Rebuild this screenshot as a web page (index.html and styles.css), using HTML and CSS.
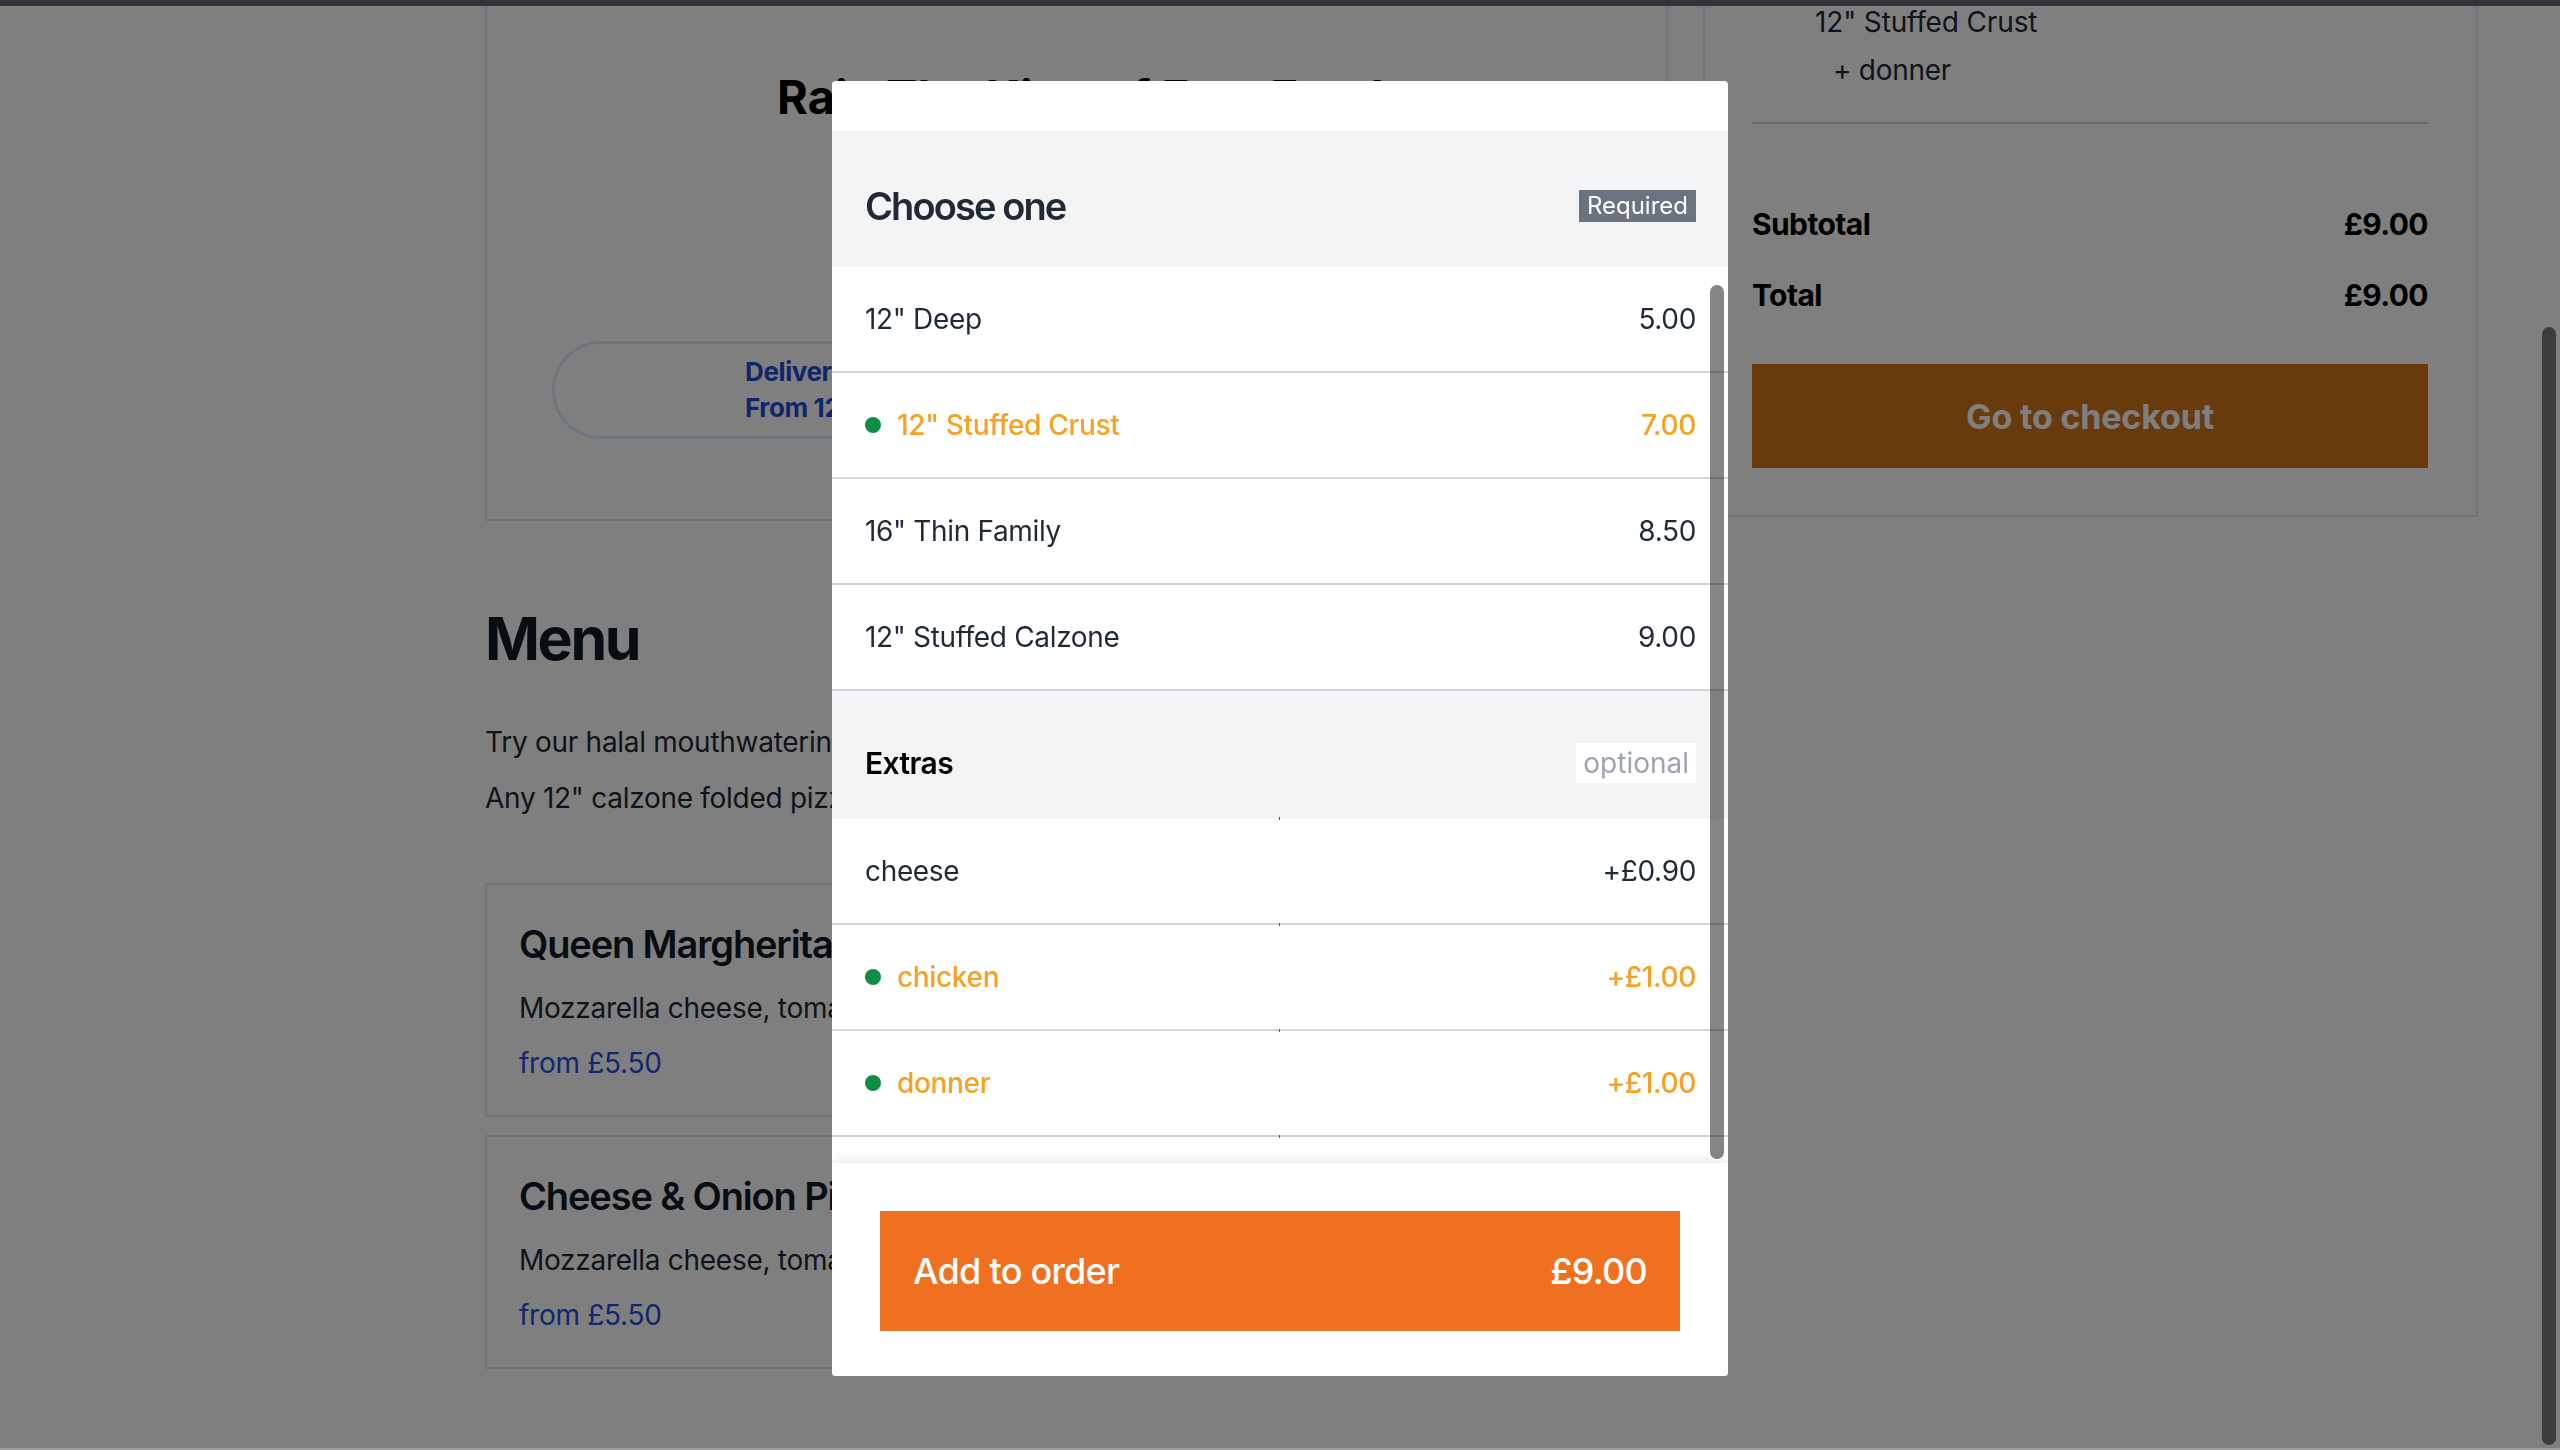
FILE: index.html
```html
<!DOCTYPE html>
<html lang="en">
<head>
<meta charset="utf-8">
<title>Raja - Menu</title>
<link rel="stylesheet" href="styles.css">
</head>
<body>
<div class="page">
  <div class="main-col">
    <section class="info-card">
      <h1 class="shop-title">Raja The King of Fast Food</h1>
      <div class="pill">
        <div class="pill-text">
          <span>Delivery</span>
          <span>From 12:00</span>
        </div>
      </div>
    </section>

    <section class="menu">
      <h2 class="menu-title">Menu</h2>
      <p class="menu-desc">Try our halal mouthwatering pizzas, made fresh to order.</p>
      <p class="menu-desc">Any 12" calzone folded pizza can be stuffed with your favourite toppings.</p>

      <div class="dish">
        <h3 class="dish-name">Queen Margherita</h3>
        <p class="dish-desc">Mozzarella cheese, tomato sauce and oregano</p>
        <p class="dish-price">from £5.50</p>
      </div>
      <div class="dish">
        <h3 class="dish-name">Cheese &amp; Onion Pizza</h3>
        <p class="dish-desc">Mozzarella cheese, tomato sauce and onion</p>
        <p class="dish-price">from £5.50</p>
      </div>
    </section>
  </div>

  <aside class="cart">
    <div class="cart-item">12" Stuffed Crust</div>
    <div class="cart-extra">+ donner</div>
    <hr class="cart-rule">
    <div class="cart-line"><span>Subtotal</span><span>£9.00</span></div>
    <div class="cart-line total"><span>Total</span><span>£9.00</span></div>
    <button class="checkout">Go to checkout</button>
  </aside>
</div>

<div class="overlay"></div>

<div class="modal">
  <div class="modal-top"></div>
  <div class="modal-scroll">
    <div class="group-head">
      <span class="group-title">Choose one</span>
      <span class="badge-required">Required</span>
    </div>
    <div class="opt"><span class="opt-name">12" Deep</span><span class="opt-price">5.00</span></div>
    <div class="opt selected"><span class="opt-name"><i class="dot"></i>12" Stuffed Crust</span><span class="opt-price">7.00</span></div>
    <div class="opt"><span class="opt-name">16" Thin Family</span><span class="opt-price">8.50</span></div>
    <div class="opt"><span class="opt-name">12" Stuffed Calzone</span><span class="opt-price">9.00</span></div>

    <div class="group-head extras-head">
      <span class="group-title small">Extras</span>
      <span class="badge-optional">optional</span>
    </div>
    <div class="opt extra"><span class="opt-name">cheese</span><span class="opt-price">+£0.90</span></div>
    <div class="opt extra selected"><span class="opt-name"><i class="dot"></i>chicken</span><span class="opt-price">+£1.00</span></div>
    <div class="opt extra selected"><span class="opt-name"><i class="dot"></i>donner</span><span class="opt-price">+£1.00</span></div>
    <div class="opt extra"></div>
  </div>
  <div class="thumb"></div>
  <div class="modal-foot">
    <button class="add-btn"><span>Add to order</span><span>£9.00</span></button>
  </div>
</div>

<div class="topbar"></div>
<div class="page-scroll"></div>
<div class="bottom-edge"></div>
</body>
</html>
```

FILE: styles.css
```css
* { box-sizing: border-box; }
html, body { margin: 0; padding: 0; height: 100%; overflow: hidden; }
body {
  background: #ffffff;
  font-family: "Inter", "Liberation Sans", sans-serif;
  color: #1f2937;
}

.page {
  display: flex;
  align-items: flex-start;
  gap: 35px;
  padding-left: 485px;
  margin-top: -120px;
}
.main-col { width: 1183px; }

.info-card {
  border: 2px solid #e5e7eb;
  padding: 186px 0 80px 0;
}
.shop-title {
  margin: 0 0 216px 290px;
  font-size: 47px;
  line-height: 57px;
  font-weight: 700;
  color: #000;
  white-space: nowrap;
  letter-spacing: 0;
}
.pill {
  margin-left: 65px;
  width: 560px;
  height: 98px;
  border: 3px solid #dbeafe;
  border-radius: 49px;
  background: #ffffff;
  display: flex;
  align-items: center;
  padding-left: 190px;
}
.pill-text {
  display: flex;
  flex-direction: column;
  font-size: 26px;
  line-height: 36px;
  font-weight: 700;
  color: #1e4fd0;
  letter-spacing: -0.015em;
}

.menu { padding-top: 82px; }
.menu-title {
  margin: 0 0 40px 0;
  font-size: 59px;
  line-height: 71px;
  font-weight: 700;
  color: #111827;
  letter-spacing: -0.04em;
}
.menu-desc {
  margin: 0;
  font-size: 28px;
  line-height: 56px;
  color: #1f2937;
  white-space: nowrap;
  letter-spacing: -0.01em;
}
.menu-desc + .dish { margin-top: 57px; }
.dish {
  border: 2px solid #e5e7eb;
  padding: 36px 32px 32px 32px;
  margin-bottom: 18px;
}
.dish-name {
  margin: 0 0 21px 0;
  font-size: 38px;
  line-height: 46px;
  font-weight: 600;
  color: #111827;
  letter-spacing: -0.03em;
  white-space: nowrap;
}
.dish-desc {
  margin: 0 0 15px 0;
  font-size: 28px;
  line-height: 40px;
  color: #1f2937;
  letter-spacing: -0.01em;
  white-space: nowrap;
}
.dish-price {
  margin: 0;
  font-size: 28px;
  line-height: 40px;
  color: #2250e0;
  letter-spacing: -0.01em;
}

.cart {
  width: 775px;
  border: 2px solid #e5e7eb;
  padding: 116px 48px 47px 47px;
}
.cart-item {
  font-size: 28px;
  line-height: 48px;
  padding-left: 63px;
  color: #1f2937;
  letter-spacing: -0.005em;
}
.cart-extra {
  font-size: 28px;
  line-height: 48px;
  padding-left: 81px;
  color: #1f2937;
  letter-spacing: -0.01em;
}
.cart-rule {
  margin: 28px 0 0 0;
  border: 0;
  height: 2px;
  background: #d1d5db;
}
.cart-line {
  display: flex;
  justify-content: space-between;
  font-size: 30px;
  line-height: 44px;
  font-weight: 700;
  color: #000;
  margin-top: 78px;
  letter-spacing: -0.02em;
}
.cart-line.total { margin-top: 27px; }
.checkout {
  display: block;
  width: 100%;
  height: 104px;
  margin-top: 47px;
  border: 0;
  background: #d27418;
  color: #ffffff;
  font-family: inherit;
  font-size: 34px;
  font-weight: 700;
  letter-spacing: -0.005em;
}

.overlay {
  position: fixed;
  inset: 0;
  background: rgba(0, 0, 0, 0.5);
}

.modal {
  position: fixed;
  left: 832px;
  top: 81px;
  width: 896px;
  height: 1295px;
  background: #ffffff;
  border-radius: 4px;
  overflow: hidden;
  display: flex;
  flex-direction: column;
}
.modal-top { height: 50px; flex: none; }
.modal-scroll {
  height: 1032px;
  flex: none;
  overflow: hidden;
}
.group-head {
  height: 136px;
  background: #f3f4f6;
  display: flex;
  align-items: center;
  justify-content: space-between;
  padding: 14px 32px 0 33px;
}
.extras-head { height: 128px; padding-top: 16px; }
.group-title {
  font-size: 38px;
  line-height: 46px;
  font-weight: 600;
  color: #1f2937;
  letter-spacing: -0.05em;
}
.group-title.small {
  font-size: 30px;
  font-weight: 600;
  color: #000;
  letter-spacing: -0.02em;
}
.badge-required {
  height: 32px;
  padding: 0 8px;
  background: #6b7280;
  color: #ffffff;
  font-size: 24px;
  line-height: 32px;
}
.badge-optional {
  height: 40px;
  padding: 0 7px;
  background: #ffffff;
  color: #9ca3af;
  font-size: 28px;
  line-height: 40px;
}
.opt {
  position: relative;
  height: 106px;
  border-bottom: 2px solid #d1d5db;
  display: flex;
  align-items: center;
  justify-content: space-between;
  padding: 0 32px 0 33px;
  font-size: 28px;
  color: #1f2937;
  letter-spacing: -0.012em;
}
.opt.extra::before {
  content: "";
  position: absolute;
  left: 447px;
  top: -2px;
  width: 1px;
  height: 3px;
  background: #555;
}
.opt-name { display: flex; align-items: center; }
.opt.selected { color: #f6a024; font-weight: 500; }
.dot {
  display: inline-block;
  width: 16px;
  height: 16px;
  border-radius: 50%;
  background: #0f8c45;
  margin-right: 16px;
}
.thumb {
  position: absolute;
  left: 878px;
  top: 204px;
  width: 14px;
  height: 874px;
  border-radius: 7px;
  background: rgba(0, 0, 0, 0.48);
}
.modal-foot {
  position: relative;
  flex: 1;
  background: #ffffff;
  padding: 48px 48px 0 48px;
  box-shadow: 0 -5px 10px rgba(0, 0, 0, 0.07);
}
.add-btn {
  width: 100%;
  height: 120px;
  border: 0;
  background: #f07022;
  color: #ffffff;
  display: flex;
  align-items: center;
  justify-content: space-between;
  padding: 0 33px;
  font-family: inherit;
  font-size: 36px;
  font-weight: 500;
  letter-spacing: -0.02em;
}

.topbar {
  position: fixed;
  left: 0; right: 0; top: 0;
  height: 6px;
  background: #333439;
}
.page-scroll {
  position: fixed;
  right: 4px;
  top: 327px;
  bottom: 5px;
  width: 14px;
  border-radius: 7px;
  background: #3c3c3c;
}
.bottom-edge {
  position: fixed;
  left: 0; right: 0; bottom: 0;
  height: 2px;
  background: #9d9d9d;
}
```
